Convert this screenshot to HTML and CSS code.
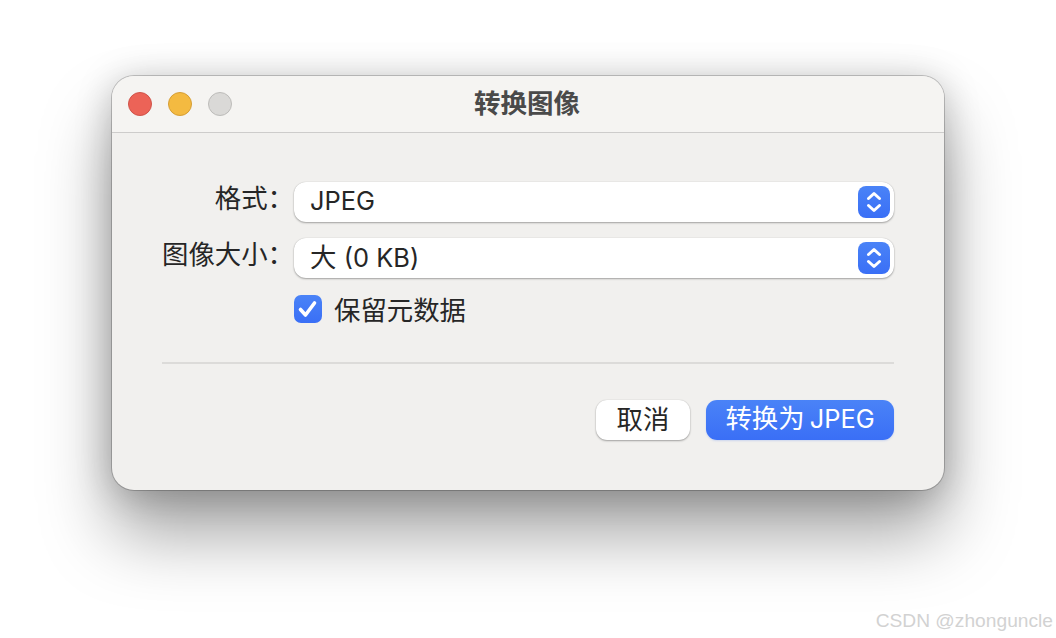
FILE: index.html
```html
<!DOCTYPE html>
<html lang="zh-CN">

<head>
    <meta charset="UTF-8" />
    <meta name="viewport" content="width=device-width, initial-scale=1.0" />
    <link rel="stylesheet" href="styles.css">
    <title>转换图像</title>
</head>

<body>
    <div class="window">
        <div class="title-bar">
            <div class="lights">
                <span class="light red"></span>
                <span class="light yellow"></span>
                <span class="light gray"></span>
            </div>
            <h1 class="title">转换图像</h1>
        </div>
        <div class="content">
            <div class="form-grid">
                <label class="label">格式：</label>
                <div class="select">
                    <span class="value latin">JPEG</span>
                    <span class="stepper">
                        <svg viewBox="0 0 32 32" width="32" height="32">
                            <path d="M10.5 12.5 L16 7.5 L21.5 12.5 M10.5 19.5 L16 24.5 L21.5 19.5" />
                        </svg>
                    </span>
                </div>
                <label class="label">图像大小：</label>
                <div class="select">
                    <span class="value">大 <span class="latin">(0 KB)</span></span>
                    <span class="stepper">
                        <svg viewBox="0 0 32 32" width="32" height="32">
                            <path d="M10.5 12.5 L16 7.5 L21.5 12.5 M10.5 19.5 L16 24.5 L21.5 19.5" />
                        </svg>
                    </span>
                </div>
                <div class="check-row">
                    <span class="checkbox">
                        <svg viewBox="0 0 28 28" width="28" height="28">
                            <path d="M6.5 14.5 L11.5 20 L20.5 8" />
                        </svg>
                    </span>
                    <span class="check-text">保留元数据</span>
                </div>
            </div>
            <div class="divider"></div>
            <div class="actions">
                <button class="btn">取消</button>
                <button class="btn btn-primary">转换为<span class="latin"> JPEG</span></button>
            </div>
        </div>
    </div>
    <div class="watermark">CSDN @zhonguncle</div>
</body>

</html>
```

FILE: styles.css
```css
* {
    margin: 0;
    padding: 0;
    box-sizing: border-box;
}

html,
body {
    height: 638px;
    overflow: hidden;
}

body {
    background-color: #fff;
    font-family: Inter, "Noto Sans CJK SC", sans-serif;
    color: #262626;
    padding: 76px 112px 0;
}

.window {
    width: 832px;
    height: 414px;
    background-color: #f1f0ee;
    border-radius: 22px;
    box-shadow: 0 0 0 1px rgba(0, 0, 0, 0.2), 0 44px 70px rgba(0, 0, 0, 0.36), 0 4px 36px rgba(0, 0, 0, 0.22);
}

.title-bar {
    height: 57px;
    display: grid;
    grid-template-columns: 1fr auto 1fr;
    align-items: center;
    padding: 0 16px;
    background-color: #f5f4f2;
    border-bottom: 1px solid #cdcccb;
    border-radius: 22px 22px 0 0;
}

.lights {
    display: flex;
    gap: 16px;
}

.light {
    width: 24px;
    height: 24px;
    border-radius: 50%;
    border: 1px solid;
}

.red {
    background-color: #ec6357;
    border-color: #d0534a;
}

.yellow {
    background-color: #f4ba41;
    border-color: #d69e35;
}

.gray {
    background-color: #dad9d7;
    border-color: #bdbcba;
}

.title {
    font-size: 26.5px;
    font-weight: 700;
    line-height: 30px;
    color: #4a4a4a;
    margin: -3px 2px 0 0;
}

.content {
    padding: 49px 50px 0;
}

.form-grid {
    display: grid;
    grid-template-columns: 132px 600px;
    row-gap: 16px;
    align-items: center;
    font-size: 26.4px;
    line-height: 30px;
}

.label {
    text-align: right;
    white-space: nowrap;
    margin-top: -8px;
}

.select {
    height: 40px;
    display: flex;
    align-items: center;
    justify-content: space-between;
    padding: 0 4px 0 16px;
    background-color: #fff;
    border-radius: 12px;
    box-shadow: 0 1px 2px rgba(0, 0, 0, 0.32), 0 0 1px rgba(0, 0, 0, 0.2);
}

.value {
    display: block;
    margin-top: -2px;
}

.latin {
    font-size: 25.4px;
}

.stepper {
    width: 32px;
    height: 32px;
    border-radius: 8px;
    background: linear-gradient(#4a83f7, #3a6ff6);
}

.stepper svg,
.checkbox svg {
    display: block;
    fill: none;
    stroke: #fff;
    stroke-width: 3;
    stroke-linecap: round;
    stroke-linejoin: round;
}

.check-row {
    grid-column: 2;
    display: flex;
    align-items: center;
    gap: 12px;
    height: 32px;
    margin-top: -1px;
}

.check-text {
    margin-top: 2px;
}

.checkbox {
    width: 28px;
    height: 28px;
    border-radius: 7px;
    background: linear-gradient(#4a83f7, #3a6ff6);
}

.checkbox svg {
    stroke-width: 3.6;
}

.divider {
    height: 2px;
    background-color: #dcdbd9;
    margin-top: 37px;
}

.actions {
    display: flex;
    justify-content: flex-end;
    gap: 16px;
    margin-top: 36px;
}

.btn {
    width: 94px;
    height: 40px;
    padding-bottom: 3px;
    border: 0;
    border-radius: 11px;
    background-color: #fff;
    color: #262626;
    font-family: inherit;
    font-size: 26.4px;
    line-height: 30px;
    box-shadow: 0 1px 2px rgba(0, 0, 0, 0.32), 0 0 1px rgba(0, 0, 0, 0.2);
}

.btn-primary {
    width: 188px;
    color: #fff;
    word-spacing: -2px;
    background: linear-gradient(#4a83f7, #3a6ff6);
    box-shadow: 0 1px 2px rgba(60, 110, 240, 0.2);
}

.watermark {
    position: absolute;
    right: 3px;
    bottom: 6px;
    font-family: "Liberation Sans", sans-serif;
    font-size: 19.2px;
    color: #d2d2d2;
    white-space: nowrap;
}
```
